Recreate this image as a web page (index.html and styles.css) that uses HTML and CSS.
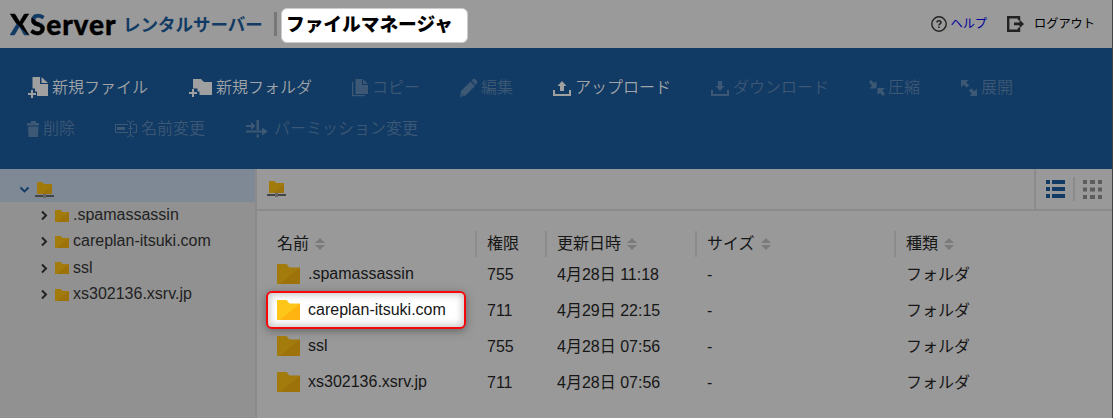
FILE: index.html
```
<!DOCTYPE html>
<html lang="ja">
<head>
<meta charset="utf-8">
<title>ファイルマネージャ</title>
<link rel="stylesheet" href="styles.css">
</head>
<body>
<svg class="defs" width="0" height="0">
  <symbol id="folder" viewBox="0 0 23 20"><path fill="var(--f1)" d="M0 0h9.5l3 3.5H23V20H0z"/><path fill="var(--f2)" d="M23 3.5V20H3z"/></symbol>
  <symbol id="root" viewBox="0 0 19 16"><path fill="#a17a0c" d="M2 0h5.500l1.500 2h8v10H2z"/><path fill="#9b720c" d="M17 3v9H7z"/><path fill="#444" d="M0 13h19v2H0z"/><path fill="#666" d="M8 12h3v4H8z"/></symbol>
  <symbol id="sort" viewBox="0 0 10 12"><path fill="#7b7b7b" d="M5 0l5 5H0zM5 12l5-5H0z"/></symbol>
</svg>
<div class="app">
  <header class="header">
    <div class="brand"><span class="x">X</span><span class="s">S</span>erver</div>
    <div class="service">レンタルサーバー</div>
    <div class="bar"></div>
    <div class="title">ファイルマネージャ</div>
    <nav class="links">
      <a class="help"><svg width="16" height="16" viewBox="0 0 16 16"><circle cx="8" cy="8" r="7.200" fill="none" stroke="#222" stroke-width="1.400"/><path d="M6 6.500C6 4.200 10 4.200 10 6.400 10 7.900 8 7.700 8 9.400M8 10.600v1.500" fill="none" stroke="#222" stroke-width="1.500"/></svg><span>ヘルプ</span></a>
      <a class="logout"><svg width="17" height="16" viewBox="0 0 17 16"><path d="M12 4.200V1.200H1.200v13.600H12V11.800" fill="none" stroke="#222" stroke-width="2.400"/><path fill="#222" d="M7 6.500h5.500V3.500L17 7.900l-4.500 4.400v-3H7z"/></svg><span>ログアウト</span></a>
    </nav>
  </header>

  <div class="toolbar">
    <div class="tools">
      <div class="tool on"><svg width="24" height="24"><path d="M4.500 3H12v7h8v12H9v-4.500H7v-3H4.500zM13.500 3L20 9h-6.500z"/><path d="M3 16h2v3h3v2H5v3H3v-3H0v-2h3z"/></svg><span>新規ファイル</span></div>
      <div class="tool on"><svg width="28" height="24"><path d="M5 5h8l3 3h8v13H11.500v-3.500h-2v-3H5z"/><path d="M4 15h2v3h3v2H6v3H4v-3H1v-2h3z"/></svg><span>新規フォルダ</span></div>
      <div class="tool"><svg width="20" height="24"><path d="M3.500 5H10v6h6v9H3.500zM11 5l5 5h-5zM0 8h1.300v13H13v1.300H0z"/></svg><span>コピー</span></div>
      <div class="tool"><svg width="21" height="24"><path d="M0 23l1-6L10.500 7.500l4.500 4.500L5.500 21.500zM11.500 6.500l1.500-1.500q1.200-.8 2.300.3l1.500 1.500q1 1 .2 2.200L15.500 11z"/><path class="cut" d="M2 19.500l2 2-2 .4-.5-.5z"/></svg><span>編集</span></div>
      <div class="tool on"><svg width="22" height="24"><path d="M0 16h2v4h14v-4h2v6H0zM9 7l4.500 5H11v5H7v-5H4.500z"/></svg><span>アップロード</span></div>
      <div class="tool"><svg width="22" height="24"><path d="M0 16h2v4h14v-4h2v6H0zM9 17l4.500-5H11V7H7v5H4.500z"/></svg><span>ダウンロード</span></div>
      <div class="tool"><svg width="19" height="24"><path d="M0 8l2-2 3 3 2.500-2v7.500H.5L3 12zM16 20l-2 2-3-3-2.500 2v-7H16l-2.500 2.500z"/></svg><span>圧縮</span></div>
      <div class="tool"><svg width="21" height="24"><path d="M1 6h7.500L6.200 8.300l3 3-2.500 2.500-3-3L1 13.500zM17 22H9.500l2.300-2.300-3-3 2.500-2.500 3 3L17 14.500z"/></svg><span>展開</span></div>
    </div>
    <div class="tools">
      <div class="tool"><svg width="15" height="24"><path d="M-1 8h4V6h5v2h3v2.500H-1zM0 11.500h10.500L10 22H.5z"/></svg><span>削除</span></div>
      <div class="tool"><svg width="26" height="24"><path d="M2 12h8v3H2z"/><path class="line" d="M13 9.500H.5v8H13M18 9.500h3.500v8H18M12 6q3.500 0 3.500 3v9q0 4-3.500 4M19 6q-3.500 0-3.500 3v9q0 4 3.500 4M13.500 13.500h4"/></svg><span>名前変更</span></div>
      <div class="tool"><svg width="29" height="24"><path d="M1 10h5V7l4.500 4L6 15v-3H1zM11.500 5h2.500v10h-2.500zM1 15.500h16v-3l6 4-6 4v-3H1zM11.500 19.500h2.500v3h-2.500z"/></svg><span>パーミッション変更</span></div>
    </div>
  </div>

  <div class="body">
    <aside class="tree">
      <div class="node-root"><svg width="9" height="6"><path d="M.5.500l4 4 4-4" fill="none" stroke="#113a64" stroke-width="1.800"/></svg><svg width="19" height="16"><use href="#root"/></svg></div>
      <div class="node"><svg class="chev" width="6" height="9"><path d="M0 .5l4 4-4 4"/></svg><svg width="14" height="12" viewBox="0 0 23 20" preserveAspectRatio="none"><use href="#folder" width="23" height="20"/></svg>.spamassassin</div>
      <div class="node"><svg class="chev" width="6" height="9"><path d="M0 .5l4 4-4 4"/></svg><svg width="14" height="12" viewBox="0 0 23 20" preserveAspectRatio="none"><use href="#folder" width="23" height="20"/></svg>careplan-itsuki.com</div>
      <div class="node"><svg class="chev" width="6" height="9"><path d="M0 .5l4 4-4 4"/></svg><svg width="14" height="12" viewBox="0 0 23 20" preserveAspectRatio="none"><use href="#folder" width="23" height="20"/></svg>ssl</div>
      <div class="node"><svg class="chev" width="6" height="9"><path d="M0 .5l4 4-4 4"/></svg><svg width="14" height="12" viewBox="0 0 23 20" preserveAspectRatio="none"><use href="#folder" width="23" height="20"/></svg>xs302136.xsrv.jp</div>
    </aside>
    <main class="main">
      <div class="path">
        <svg width="19" height="16"><use href="#root"/></svg>
        <div class="views">
          <svg width="19" height="18" fill="#113a64"><path d="M0 0h4v4H0zM6 0h13v4H6zM0 7h4v4H0zM6 7h13v4H6zM0 14h4v4H0zM6 14h13v4H6z"/></svg>
          <i class="vsep"></i>
          <svg width="19" height="19" fill="#5c5c5c"><path d="M0 0h4v4H0zM7 0h5v4H7zM15 0h4v4h-4zM0 7.500h4v4H0zM7 7.500h5v4H7zM15 7.500h4v4h-4zM0 15h4v4H0zM7 15h5v4H7zM15 15h4v4h-4z"/></svg>
        </div>
      </div>
      <div class="files">
        <div class="row head"><div><span>名前</span><svg width="10" height="12"><use href="#sort"/></svg></div><div><span>権限</span></div><div><span>更新日時</span><svg width="10" height="12"><use href="#sort"/></svg></div><div><span>サイズ</span><svg width="10" height="12"><use href="#sort"/></svg></div><div><span>種類</span><svg width="10" height="12"><use href="#sort"/></svg></div></div>
        <div class="row"><div class="name"><svg width="23" height="20"><use href="#folder"/></svg>.spamassassin</div><div>755</div><div>4月28日 11:18</div><div>-</div><div>フォルダ</div></div>
        <div class="row"><div class="name picked"><svg width="23" height="20"><use href="#folder"/></svg>careplan-itsuki.com</div><div>711</div><div>4月29日 22:15</div><div>-</div><div>フォルダ</div></div>
        <div class="row"><div class="name"><svg width="23" height="20"><use href="#folder"/></svg>ssl</div><div>755</div><div>4月28日 07:56</div><div>-</div><div>フォルダ</div></div>
        <div class="row"><div class="name"><svg width="23" height="20"><use href="#folder"/></svg>xs302136.xsrv.jp</div><div>711</div><div>4月28日 07:56</div><div>-</div><div>フォルダ</div></div>
      </div>
    </main>
  </div>
</div>
</body>
</html>
```

FILE: styles.css
```
* { box-sizing: border-box; }
body {
  margin: 0;
  font: 16px/24px "Liberation Sans", "Noto Sans CJK JP", sans-serif;
  color: #161616;
  background: #999;
  --f1: #a37b0d;
  --f2: #9d720b;
}
svg { display: block; flex: none; overflow: visible; }
.defs { position: absolute; }
.app { width: 1113px; height: 418px; border-right: 1px solid #444; overflow: hidden; display: flex; flex-direction: column; }

.header { height: 48px; flex: none; display: flex; align-items: center; padding-left: 10px; background: #9a9a9a; }
.brand { width: 113px; font: 900 28px/46px Lato, sans-serif; letter-spacing: .9px; -webkit-text-stroke: .4px #000; color: #000; white-space: nowrap; }
.brand .x, .brand .s { color: transparent; -webkit-text-stroke: .4px transparent; background-clip: text; -webkit-background-clip: text; }
.brand .x { background-image: linear-gradient(45deg, #113a64 44%, #000 45%); }
.brand .s { background-image: linear-gradient(35deg, #000 54%, #113a64 55%); }
.service { width: 151px; font: 700 17.5px/46px "Noto Sans CJK JP", sans-serif; color: #113a64; white-space: nowrap; }
.bar { width: 3px; height: 24px; background: #777; margin-right: 4px; }
.title { width: 187px; height: 35px; margin-top: 3px; padding-left: 4px; border: 1px solid #ccc; border-radius: 6px; background: #fff; color: #000; font: 900 18.700px/28px "Noto Sans CJK JP", sans-serif; white-space: nowrap; }
.links { margin-left: auto; padding-right: 17px; display: flex; gap: 20px; font: 12.200px/20px "Noto Sans CJK JP", sans-serif; color: #000; }
.links a { display: flex; align-items: center; }
.links span { margin-top: -3px; }
.help { gap: 4px; }
.help span { color: #00009a; }
.logout { gap: 10px; }

.toolbar { height: 121px; flex: none; padding: 17px 0 0 28px; background: #113a64; }
.tools { display: flex; gap: 40px; height: 41px; font-family: "Noto Sans CJK JP", sans-serif; font-weight: 350; }
.tool { display: flex; align-items: center; white-space: nowrap; color: #3c5875; fill: #3c5875; }
.tool span { margin-top: 1px; }
.tool.on { color: #a0a4a8; fill: #a0a0a0; }
.tool .cut { fill: #27496d; }
.tool .line { fill: none; stroke: #3c5875; }

.body { flex: 1; display: flex; min-height: 0; }
.tree { width: 257px; flex: none; background: #919191; border-right: 2px solid #8b8b8b; }
.node-root { height: 33px; padding: 8px 0 0 20px; display: flex; align-items: center; gap: 6px; background: #7f8995; }
.node { display: flex; align-items: center; height: 26.300px; padding-left: 42px; white-space: nowrap; color: #222; line-height: 26px; }
.node svg { margin-top: 1px; margin-right: 4px; }
.node .chev { margin-right: 7px; fill: none; stroke: #222; stroke-width: 2; }

.main { flex: 1; min-width: 0; background: #999; }
.path { height: 42px; border-bottom: 2px solid #8b8b8b; padding: 0 0 1px 10px; display: flex; justify-content: space-between; align-items: center; }
.views { height: 40px; margin-bottom: -1px; width: 78px; border-left: 2px solid #8b8b8b; padding-left: 10px; display: flex; align-items: center; gap: 8px; }
.vsep { width: 2px; height: 24px; background: #8b8b8b; }
.files { padding-top: 20px; }
.row { display: grid; grid-template-columns: 218px 70px 150px 199px 1fr; height: 36px; align-items: center; white-space: nowrap; }
.row > div { padding-left: 12px; }
.row > div:first-child { padding-left: 20px; }
.head { height: 26px; font-family: "Noto Sans CJK JP", sans-serif; }
.head > div { display: flex; align-items: center; gap: 6px; height: 26px; }
.head span { margin-top: -4px; }
.head > div + div { border-left: 2px solid #8b8b8b; padding-left: 10px; }
.row .name { display: flex; align-items: center; gap: 8px; margin-top: -2px; }
.row .picked {
  --f1: #ffc61a;
  --f2: #ffb412;
  width: 200px;
  height: 38px;
  margin: -2px 0 0 9px;
  padding-left: 9px !important;
  border: 2px solid #f5080c;
  border-radius: 6px;
  background: #fff;
  box-shadow: inset 0 0 7px 2px #c8c8c8, 0 2px 8px #666;
}
.row:has(.picked) { grid-template-rows: 36px; }
```
